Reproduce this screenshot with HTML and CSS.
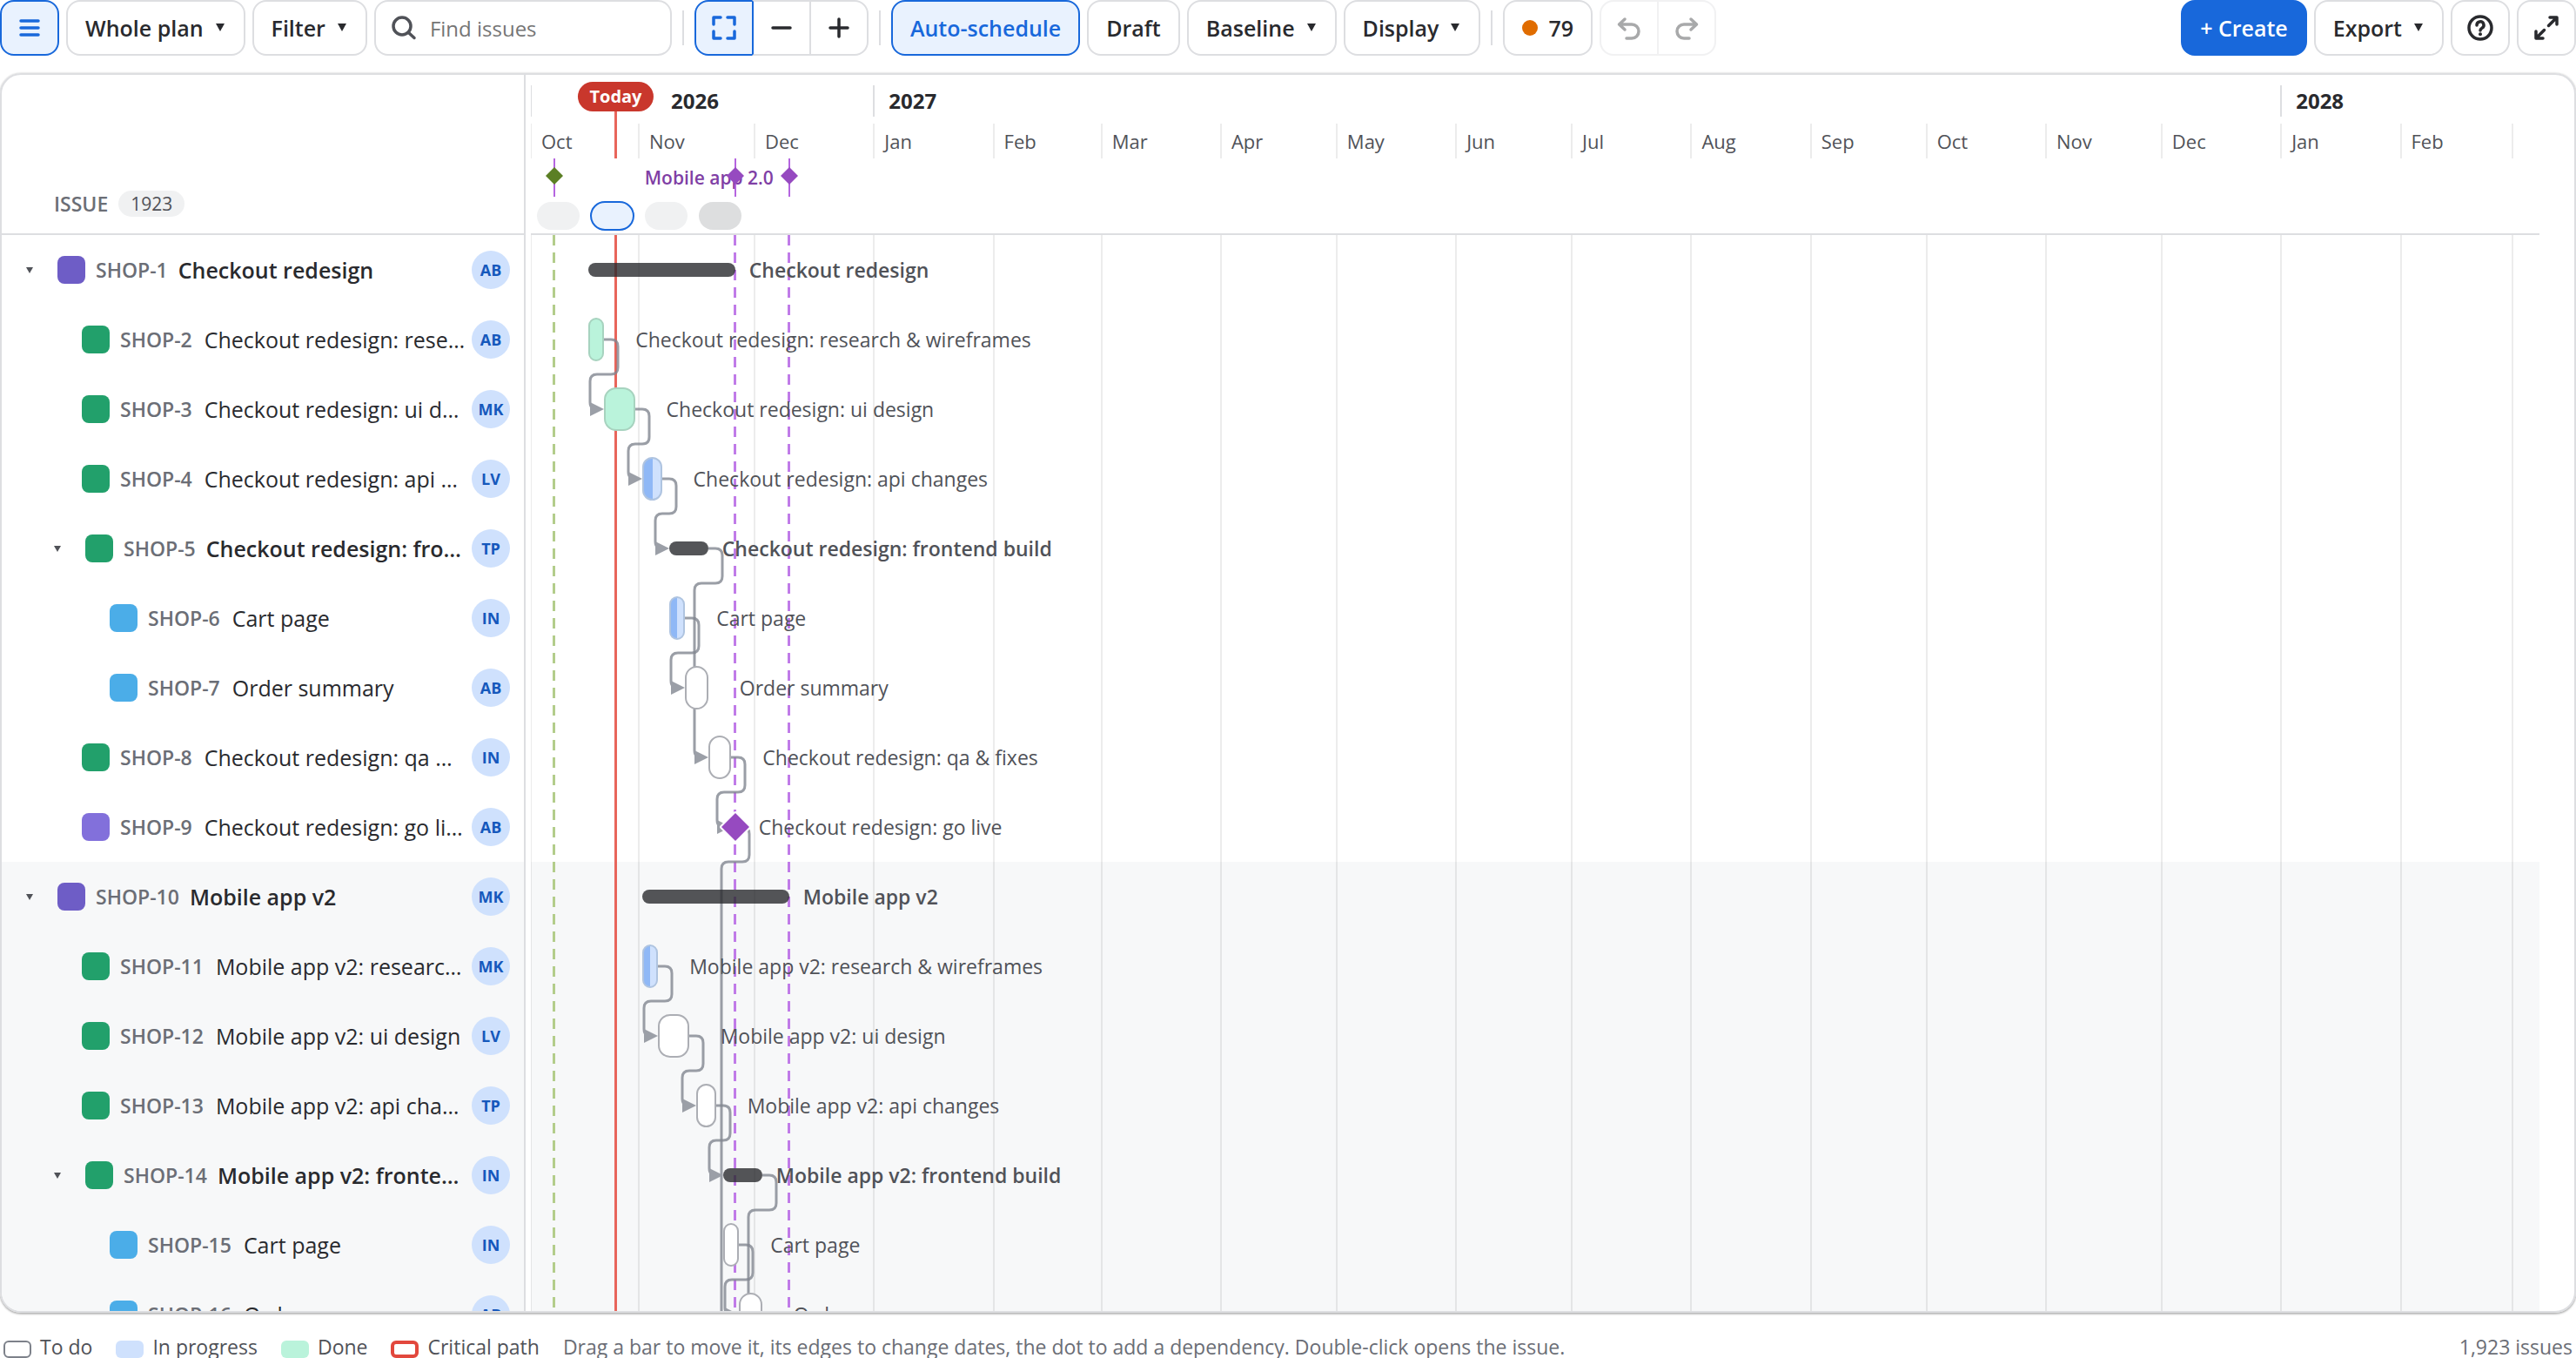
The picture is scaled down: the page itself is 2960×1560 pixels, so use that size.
FILE: index.html
```html
<!DOCTYPE html>
<html lang="en">
<head>
<meta charset="utf-8">
<meta name="viewport" content="width=device-width, initial-scale=1">
<title>Plan timeline</title>
<link rel="stylesheet" href="styles.css">
</head>
<body>
<header class="toolbar">
  <button class="btn icon-btn active" aria-label="Toggle issue list"><svg class="icon" viewBox="0 0 32 32"><path d="M6 8H26M6 16H26M6 24H26"/></svg></button>
  <button class="btn">Whole plan<svg class="caret" viewBox="0 0 14 10"><path d="M2 0H12L7 9Z"/></svg></button>
  <button class="btn">Filter<svg class="caret" viewBox="0 0 14 10"><path d="M2 0H12L7 9Z"/></svg></button>
  <label class="search">
    <svg class="icon" viewBox="0 0 32 32"><circle cx="14" cy="14" r="10"/><path d="M21.500 21.500L28 27.500"/></svg>
    <input type="text" placeholder="Find issues" aria-label="Find issues">
  </label>
  <span class="sep"></span>
  <div class="group">
    <button class="btn icon-btn active" aria-label="Zoom to fit"><svg class="icon" viewBox="0 0 32 32"><path d="M4 12V4H12M20 4H28V12M28 20V28H20M12 28H4V20"/></svg></button>
    <button class="btn icon-btn" aria-label="Zoom out"><svg class="icon" viewBox="0 0 32 32"><path d="M6 16H26"/></svg></button>
    <button class="btn icon-btn" aria-label="Zoom in"><svg class="icon" viewBox="0 0 32 32"><path d="M6 16H26M16 6V26"/></svg></button>
  </div>
  <span class="sep"></span>
  <button class="btn active">Auto-schedule</button>
  <button class="btn">Draft</button>
  <button class="btn">Baseline<svg class="caret" viewBox="0 0 14 10"><path d="M2 0H12L7 9Z"/></svg></button>
  <button class="btn">Display<svg class="caret" viewBox="0 0 14 10"><path d="M2 0H12L7 9Z"/></svg></button>
  <span class="sep"></span>
  <button class="btn"><span class="warn-dot"></span>79</button>
  <div class="group history">
    <button class="btn icon-btn" disabled aria-label="Undo"><svg class="icon" viewBox="0 0 32 32"><path d="M11 6L4.500 12L11 18M5 12H19A8 8 0 0 1 19 28H13"/></svg></button>
    <button class="btn icon-btn" disabled aria-label="Redo"><svg class="icon" viewBox="0 0 32 32"><path d="M21 6L27.500 12L21 18M27 12H13A8 8 0 0 0 13 28H19"/></svg></button>
  </div>
  <span class="spacer"></span>
  <button class="btn primary">+ Create</button>
  <button class="btn">Export<svg class="caret" viewBox="0 0 14 10"><path d="M2 0H12L7 9Z"/></svg></button>
  <button class="btn icon-btn" aria-label="Help"><svg class="icon" viewBox="0 0 32 32"><circle cx="16" cy="16" r="13"/><path d="M12 13A4 4 0 1 1 18 16.300C16.500 17.200 16 17.800 16 19"/><circle class="solid" cx="16" cy="23.300" r="2"/></svg></button>
  <button class="btn icon-btn" aria-label="Full screen"><svg class="icon" viewBox="0 0 32 32"><path d="M18.500 13.500L27 5M20 4H28V12M13.500 18.500L5 27M4 20V28H12"/></svg></button>
</header>

<main class="plan">
  <section class="issues">
    <div class="issues-head">ISSUE <span class="count">1923</span></div>
    <ul class="issue-list">
      <li class="issue level-0"><button class="toggle" aria-label="Collapse"><svg viewBox="0 0 8 7"><path d="M0 0H8L4 7Z"/></svg></button><i class="type epic"></i><span class="key">SHOP-1</span><span class="title parent">Checkout redesign</span><span class="avatar">AB</span></li>
      <li class="issue level-1"><i class="type story"></i><span class="key">SHOP-2</span><span class="title">Checkout redesign: research &amp; wireframes</span><span class="avatar">AB</span></li>
      <li class="issue level-1"><i class="type story"></i><span class="key">SHOP-3</span><span class="title">Checkout redesign: ui design</span><span class="avatar">MK</span></li>
      <li class="issue level-1"><i class="type story"></i><span class="key">SHOP-4</span><span class="title">Checkout redesign: api changes</span><span class="avatar">LV</span></li>
      <li class="issue level-1 has-children"><button class="toggle" aria-label="Collapse"><svg viewBox="0 0 8 7"><path d="M0 0H8L4 7Z"/></svg></button><i class="type story"></i><span class="key">SHOP-5</span><span class="title parent">Checkout redesign: frontend build</span><span class="avatar">TP</span></li>
      <li class="issue level-2"><i class="type subtask"></i><span class="key">SHOP-6</span><span class="title">Cart page</span><span class="avatar">IN</span></li>
      <li class="issue level-2"><i class="type subtask"></i><span class="key">SHOP-7</span><span class="title">Order summary</span><span class="avatar">AB</span></li>
      <li class="issue level-1"><i class="type story"></i><span class="key">SHOP-8</span><span class="title">Checkout redesign: qa &amp; fixes</span><span class="avatar">IN</span></li>
      <li class="issue level-1"><i class="type milestone"></i><span class="key">SHOP-9</span><span class="title">Checkout redesign: go live</span><span class="avatar">AB</span></li>
      <li class="issue level-0 shaded"><button class="toggle" aria-label="Collapse"><svg viewBox="0 0 8 7"><path d="M0 0H8L4 7Z"/></svg></button><i class="type epic"></i><span class="key">SHOP-10</span><span class="title parent">Mobile app v2</span><span class="avatar">MK</span></li>
      <li class="issue level-1 shaded"><i class="type story"></i><span class="key">SHOP-11</span><span class="title">Mobile app v2: research &amp; wireframes</span><span class="avatar">MK</span></li>
      <li class="issue level-1 shaded"><i class="type story"></i><span class="key">SHOP-12</span><span class="title">Mobile app v2: ui design</span><span class="avatar">LV</span></li>
      <li class="issue level-1 shaded"><i class="type story"></i><span class="key">SHOP-13</span><span class="title">Mobile app v2: api changes</span><span class="avatar">TP</span></li>
      <li class="issue level-1 has-children shaded"><button class="toggle" aria-label="Collapse"><svg viewBox="0 0 8 7"><path d="M0 0H8L4 7Z"/></svg></button><i class="type story"></i><span class="key">SHOP-14</span><span class="title parent">Mobile app v2: frontend build</span><span class="avatar">IN</span></li>
      <li class="issue level-2 shaded"><i class="type subtask"></i><span class="key">SHOP-15</span><span class="title">Cart page</span><span class="avatar">IN</span></li>
      <li class="issue level-2 shaded"><i class="type subtask"></i><span class="key">SHOP-16</span><span class="title">Order summary</span><span class="avatar">AB</span></li>
    </ul>
  </section>

  <section class="timeline">
    <div class="timeline-head">
      <div class="years"><span class="current">2026</span><span>2027</span><span>2028</span></div>
      <div class="months"><span>Oct</span><span>Nov</span><span>Dec</span><span>Jan</span><span>Feb</span><span>Mar</span><span>Apr</span><span>May</span><span>Jun</span><span>Jul</span><span>Aug</span><span>Sep</span><span>Oct</span><span>Nov</span><span>Dec</span><span>Jan</span><span>Feb</span><span></span></div>
      <div class="releases">
        <span class="release-name" style="--s:67">Mobile app 2.0</span>
        <span class="release done" style="--s:6"><svg viewBox="0 0 20 20"><path d="M10 0L20 10L10 20L0 10Z"/></svg></span>
        <span class="release" style="--s:53"><svg viewBox="0 0 20 20"><path d="M10 0L20 10L10 20L0 10Z"/></svg></span>
        <span class="release" style="--s:67"><svg viewBox="0 0 20 20"><path d="M10 0L20 10L10 20L0 10Z"/></svg></span>
      </div>
      <div class="sprints">
        <span class="sprint" style="--s:1"></span><span class="sprint active" style="--s:15"></span><span class="sprint" style="--s:29"></span><span class="sprint dark" style="--s:43"></span>
      </div>
      <span class="today-stem" style="--s:22"></span>
      <span class="today" style="--s:22">Today</span>
    </div>

    <div class="chart">
      <div class="gridlines"><i></i><i></i><i></i><i></i><i></i><i></i><i></i><i></i><i></i><i></i><i></i><i></i><i></i><i></i><i></i><i></i><i></i><i></i></div>
      <i class="marker done" style="--s:6"></i>
      <i class="marker" style="--s:53"></i>
      <i class="marker" style="--s:67"></i>
      <i class="today-line" style="--s:22"></i>
      <svg class="links" viewBox="0 0 2308 1280" preserveAspectRatio="none">
        <g class="lines">
          <path d="M84 120H92Q100 120 100 128V152Q100 160 92 160H76Q68 160 68 168V192Q68 197 71 199"/>
          <path d="M120 200H128Q136 200 136 208V232Q136 240 128 240H120Q112 240 112 248V272Q112 277 115 279"/>
          <path d="M151 280H159Q167 280 167 288V312Q167 320 159 320H151Q143 320 143 328V352Q143 357 146 359"/>
          <path d="M204 360H212Q220 360 220 368V392Q220 400 212 400H196Q188 400 188 408V592Q188 597 191 599"/>
          <path d="M177 440H185Q193 440 193 448V472Q193 480 185 480H169Q161 480 161 488V512Q161 517 164 519"/>
          <path d="M230 600H238Q246 600 246 608V632Q246 640 238 640H222Q214 640 214 648V672Q214 677 217 679"/>
          <path d="M235 680H243Q251 680 251 688V712Q251 720 243 720H227Q219 720 219 728V1280"/>
          <path d="M146 840H154Q162 840 162 848V872Q162 880 154 880H138Q130 880 130 888V912Q130 917 133 919"/>
          <path d="M182 920H190Q198 920 198 928V952Q198 960 190 960H182Q174 960 174 968V992Q174 997 177 999"/>
          <path d="M213 1000H221Q229 1000 229 1008V1032Q229 1040 221 1040H213Q205 1040 205 1048V1072Q205 1077 208 1079"/>
          <path d="M266 1080H274Q282 1080 282 1088V1112Q282 1120 274 1120H258Q250 1120 250 1128V1280"/>
          <path d="M239 1160H247Q255 1160 255 1168V1192Q255 1200 247 1200H231Q223 1200 223 1208V1232Q223 1237 226 1239"/>
        </g>
        <g class="heads">
          <path d="M68 192V208L84 200Z"/><path d="M112 272V288L128 280Z"/><path d="M143 352V368L159 360Z"/><path d="M188 592V608L204 600Z"/><path d="M161 512V528L177 520Z"/><path d="M214 672V688L230 680Z"/><path d="M130 912V928L146 920Z"/><path d="M174 992V1008L190 1000Z"/><path d="M205 1072V1088L221 1080Z"/><path d="M223 1232V1248L239 1240Z"/>
        </g>
      </svg>
      <div class="lane"><i class="bar summary" style="--s:15;--e:53"></i><span class="label parent" style="--e:53">Checkout redesign</span></div>
      <div class="lane"><i class="bar done" style="--s:15;--e:19"></i><span class="label" style="--e:19">Checkout redesign: research &amp; wireframes</span></div>
      <div class="lane"><i class="bar done" style="--s:19;--e:27"></i><span class="label" style="--e:27">Checkout redesign: ui design</span></div>
      <div class="lane"><i class="bar progress" style="--s:29;--e:34"></i><span class="label" style="--e:34">Checkout redesign: api changes</span></div>
      <div class="lane"><i class="bar summary" style="--s:36;--e:46"></i><span class="label parent" style="--e:46">Checkout redesign: frontend build</span></div>
      <div class="lane"><i class="bar progress" style="--s:36;--e:40"></i><span class="label" style="--e:40">Cart page</span></div>
      <div class="lane"><i class="bar" style="--s:40;--e:46"></i><span class="label" style="--e:46">Order summary</span></div>
      <div class="lane"><i class="bar" style="--s:46;--e:52"></i><span class="label" style="--e:52">Checkout redesign: qa &amp; fixes</span></div>
      <div class="lane"><svg class="diamond" style="--s:53" viewBox="0 0 40 40"><path d="M20 4L36 20L20 36L4 20Z"/></svg><span class="label after-diamond" style="--e:53">Checkout redesign: go live</span></div>
      <div class="lane shaded"><i class="bar summary" style="--s:29;--e:67"></i><span class="label parent" style="--e:67">Mobile app v2</span></div>
      <div class="lane shaded"><i class="bar progress" style="--s:29;--e:33"></i><span class="label" style="--e:33">Mobile app v2: research &amp; wireframes</span></div>
      <div class="lane shaded"><i class="bar" style="--s:33;--e:41"></i><span class="label" style="--e:41">Mobile app v2: ui design</span></div>
      <div class="lane shaded"><i class="bar" style="--s:43;--e:48"></i><span class="label" style="--e:48">Mobile app v2: api changes</span></div>
      <div class="lane shaded"><i class="bar summary" style="--s:50;--e:60"></i><span class="label parent" style="--e:60">Mobile app v2: frontend build</span></div>
      <div class="lane shaded"><i class="bar" style="--s:50;--e:54"></i><span class="label" style="--e:54">Cart page</span></div>
      <div class="lane shaded"><i class="bar" style="--s:54;--e:60"></i><span class="label" style="--e:60">Order summary</span></div>
    </div>
  </section>
</main>

<footer class="legend">
  <span class="legend-item"><i class="swatch"></i>To do</span>
  <span class="legend-item"><i class="swatch progress"></i>In progress</span>
  <span class="legend-item"><i class="swatch done"></i>Done</span>
  <span class="legend-item"><i class="swatch critical"></i>Critical path</span>
  <span class="hint">Drag a bar to move it, its edges to change dates, the dot to add a dependency. Double-click opens the issue.</span>
  <span class="total">1,923 issues</span>
</footer>
</body>
</html>
```
FILE: styles.css
```css
:root {
  --text: #292a2e;
  --text-subtle: #505258;
  --text-subtlest: #6b6e76;
  --border: #dddee1;
  --blue: #1868db;
  --blue-bg: #e9f2fe;
  --line: rgba(11, 18, 14, 0.08);
  --days: 521;
  --month-columns:
    minmax(0, 28fr) minmax(0, 30fr) minmax(0, 31fr) minmax(0, 31fr) minmax(0, 28fr) minmax(0, 31fr)
    minmax(0, 30fr) minmax(0, 31fr) minmax(0, 30fr) minmax(0, 31fr) minmax(0, 31fr) minmax(0, 30fr)
    minmax(0, 31fr) minmax(0, 30fr) minmax(0, 31fr) minmax(0, 31fr) minmax(0, 29fr) minmax(0, 7fr);
}

* { box-sizing: border-box; }

body {
  margin: 0;
  height: 100vh;
  display: flex;
  flex-direction: column;
  overflow: hidden;
  background: #fff;
  color: var(--text);
  font-family: "Open Sans", "Noto Sans", sans-serif;
  font-size: 25px;
}

/* Toolbar */
.toolbar {
  display: flex;
  align-items: center;
  gap: 8px;
  margin-bottom: 20px;
}
.btn {
  display: flex;
  align-items: center;
  justify-content: center;
  gap: 12px;
  height: 64px;
  padding: 0 20px;
  border: 2px solid var(--border);
  border-radius: 16px;
  background: #fff;
  color: var(--text);
  font: 600 25px "Open Sans", "Noto Sans", sans-serif;
  white-space: nowrap;
}
.icon-btn { width: 68px; padding: 0; }
.btn.active {
  border-color: var(--blue);
  background: var(--blue-bg);
  color: var(--blue);
}
.btn.primary {
  border-color: var(--blue);
  background: var(--blue);
  color: #fff;
}
.icon {
  flex: none;
  width: 32px;
  height: 32px;
  fill: none;
  stroke: currentColor;
  stroke-width: 3.5;
  stroke-linecap: round;
  stroke-linejoin: round;
}
.icon .solid { fill: currentColor; stroke: none; }
.caret { width: 14px; height: 10px; fill: currentColor; }
.search {
  display: flex;
  align-items: center;
  gap: 14px;
  width: 342px;
  height: 64px;
  padding: 0 16px;
  border: 2px solid var(--border);
  border-radius: 16px;
  color: var(--text-subtle);
}
.search input {
  flex: 1;
  min-width: 0;
  padding: 0;
  border: 0;
  outline: 0;
  background: none;
  color: var(--text);
  font: 24px "Open Sans", "Noto Sans", sans-serif;
}
.search input::placeholder { color: #757575; opacity: 1; }
.sep { width: 2px; height: 40px; margin: 0 4px; background: var(--border); }
.group { display: flex; }
.group .btn { border-radius: 0; }
.group .btn:first-child { border-radius: 16px 0 0 16px; }
.group .btn:last-child { border-radius: 0 16px 16px 0; }
.group .btn + .btn { margin-left: -2px; }
.group .btn.active + .btn { border-left-color: var(--blue); }
.history { opacity: 0.4; }
.history .btn { border-color: var(--border); }
.warn-dot { width: 18px; height: 18px; border-radius: 50%; background: #e06c00; }
.spacer { flex: 1; }

/* Plan panel */
.plan {
  flex: 1;
  min-height: 0;
  display: flex;
  overflow: hidden;
  border: 2px solid var(--border);
  border-radius: 24px;
  box-shadow: 0 2px 2px rgba(30, 31, 33, 0.25), 0 0 2px rgba(30, 31, 33, 0.31);
}
.issues {
  flex: none;
  width: 602px;
  border-right: 2px solid var(--border);
}
.issues-head {
  display: flex;
  align-items: flex-end;
  gap: 12px;
  height: 184px;
  padding: 0 0 19px 60px;
  border-bottom: 2px solid var(--border);
  color: var(--text-subtlest);
  font-size: 23px;
  font-weight: 600;
  line-height: 30px;
}
.count {
  padding: 0 14px;
  border-radius: 15px;
  background: #f0f1f2;
  color: var(--text-subtle);
  font-size: 21px;
  font-weight: 400;
}
.issue-list { margin: 0; padding: 0; list-style: none; }
.issue {
  display: flex;
  align-items: center;
  gap: 12px;
  height: 80px;
  padding-right: 16px;
  white-space: nowrap;
}
.shaded { background: #f7f8f9; }
.level-0 { padding-left: 12px; }
.level-1 { padding-left: 92px; }
.level-1.has-children { padding-left: 44px; }
.level-2 { padding-left: 124px; }
.toggle {
  display: flex;
  align-items: center;
  justify-content: center;
  width: 40px;
  height: 40px;
  padding: 0;
  border: 0;
  background: none;
}
.toggle svg { width: 8px; height: 7px; fill: var(--text-subtle); }
.type { flex: none; width: 32px; height: 32px; border-radius: 8px; }
.epic { background: #6e5dc6; }
.story { background: #22a06b; }
.subtask { background: #4bade8; }
.milestone { background: #8270db; }
.key { color: var(--text-subtlest); font-size: 23px; font-weight: 600; }
.title { flex: 1; min-width: 0; margin: 0 -5px 0 2px; overflow: hidden; text-overflow: ellipsis; }
.parent { font-weight: 600; }
.title.parent { margin-left: 0; }
.avatar {
  flex: none;
  width: 44px;
  height: 44px;
  border-radius: 50%;
  background: #cfe1fd;
  color: #1558bc;
  font-size: 18px;
  font-weight: 700;
  line-height: 44px;
  text-align: center;
}

/* Timeline */
.timeline { flex: 1; min-width: 0; margin: 0 40px 0 6px; overflow: hidden; }
.timeline-head {
  position: relative;
  height: 184px;
  padding-top: 12px;
  border-bottom: 2px solid var(--border);
}
.years {
  display: grid;
  grid-template-columns: minmax(0, 89fr) minmax(0, 365fr) minmax(0, 67fr);
  margin-bottom: 8px;
  font-size: 24px;
  font-weight: 700;
  line-height: 36px;
}
.years span { height: 36px; margin-left: -1px; padding-left: 16px; border-left: 2px solid var(--border); }
.years .current { padding-left: 160px; }
.months, .gridlines { display: grid; grid-template-columns: var(--month-columns); }
.months { color: var(--text-subtle); font-size: 22px; line-height: 40px; }
.months span, .gridlines i { margin-left: -1px; border-left: 2px solid var(--line); }
.months span { height: 40px; padding-left: 11px; }
.releases { position: relative; height: 44px; }
.release, .release-name, .sprint, .today, .today-stem, .marker, .today-line, .bar, .diamond {
  position: absolute;
  left: calc(var(--s) / var(--days) * 100%);
}
.release { top: 0; bottom: 0; width: 2px; margin-left: -1px; background: #b565e0; }
.release svg {
  position: absolute;
  top: 10px;
  left: -9px;
  width: 20px;
  height: 20px;
  fill: #964ac0;
}
.release.done svg { fill: #5b7f24; }
.release-name {
  transform: translateX(-100%);
  padding-right: 18px;
  color: #803fa5;
  font-size: 21px;
  font-weight: 600;
  line-height: 44px;
  white-space: nowrap;
}
.sprints { position: relative; height: 42px; }
.sprint {
  top: 6px;
  width: 49px;
  height: 32px;
  margin-left: 3px;
  border-radius: 16px;
  background: #f0f1f2;
}
.sprint.dark { background: #dddedf; }
.sprint.active { outline: 2px solid var(--blue); outline-offset: -1px; background: var(--blue-bg); }
.today-stem { top: 40px; height: 56px; width: 3px; margin-left: -1px; background: #e8655b; }
.today {
  top: 8px;
  padding: 0 13px;
  transform: translateX(-50%);
  border-radius: 17px;
  background: #c9372c;
  color: #fff;
  font-size: 20px;
  font-weight: 700;
  line-height: 34px;
}

.chart { position: relative; }
.gridlines { position: absolute; inset: 0; z-index: 1; }
.marker {
  top: 0;
  bottom: 0;
  z-index: 1;
  width: 3px;
  margin-left: -2px;
  background: repeating-linear-gradient(to bottom, #c07be8 0 12px, transparent 12px 20px);
}
.marker.done { background: repeating-linear-gradient(to bottom, #b3cd8b 0 12px, transparent 12px 20px); }
.today-line { top: 0; bottom: 0; z-index: 1; width: 3px; margin-left: -1px; background: #e8655b; }
.links { position: absolute; top: 0; left: 0; z-index: 2; width: 100%; height: 1280px; }
.lines path { fill: none; stroke: #818690; stroke-width: 3; opacity: 0.8; }
.heads path { fill: #9b9fa7; }
.lane { position: relative; height: 80px; }
.bar {
  top: 15px;
  z-index: 3;
  width: calc((var(--e) - var(--s)) / var(--days) * 100%);
  height: 50px;
  border: 2px solid #acaeb4;
  border-radius: 14px;
  background: #fff;
}
.bar.done { border-color: #a7d3bf; background: #baf3db; }
.bar.progress { border-color: #afc4e0; background: linear-gradient(to right, #8fb8f6 50%, #cfe1fd 50%); }
.bar.summary { top: 32px; height: 16px; border: 0; border-radius: 8px; background: rgba(41, 42, 46, 0.8); }
.label {
  position: absolute;
  left: calc(var(--e) / var(--days) * 100% + 36px);
  z-index: 4;
  color: var(--text-subtle);
  font-size: 23px;
  line-height: 80px;
  white-space: nowrap;
}
.label.parent { left: calc(var(--e) / var(--days) * 100% + 16px); }
.label.after-diamond { left: calc(var(--e) / var(--days) * 100% + 27px); }
.diamond {
  top: 20px;
  z-index: 3;
  width: 40px;
  height: 40px;
  margin-left: -20px;
  fill: #964ac0;
  stroke: #fff;
  stroke-width: 4;
  stroke-linejoin: round;
  paint-order: stroke;
}

/* Legend */
.legend {
  display: flex;
  align-items: flex-end;
  gap: 27px;
  height: 52px;
  padding: 0 4px;
  color: var(--text-subtle);
  font-size: 23px;
  line-height: 26px;
  white-space: nowrap;
}
.legend-item { display: flex; align-items: flex-end; gap: 10px; }
.swatch { width: 32px; height: 20px; border: 2px solid #7d818a; border-radius: 6px; }
.swatch.progress { border: 0; background: #cfe1fd; }
.swatch.done { border: 0; background: #baf3db; }
.swatch.critical { border: 4px solid #e2483d; }
.hint, .total { color: var(--text-subtlest); }
.total { margin-left: auto; }
```
